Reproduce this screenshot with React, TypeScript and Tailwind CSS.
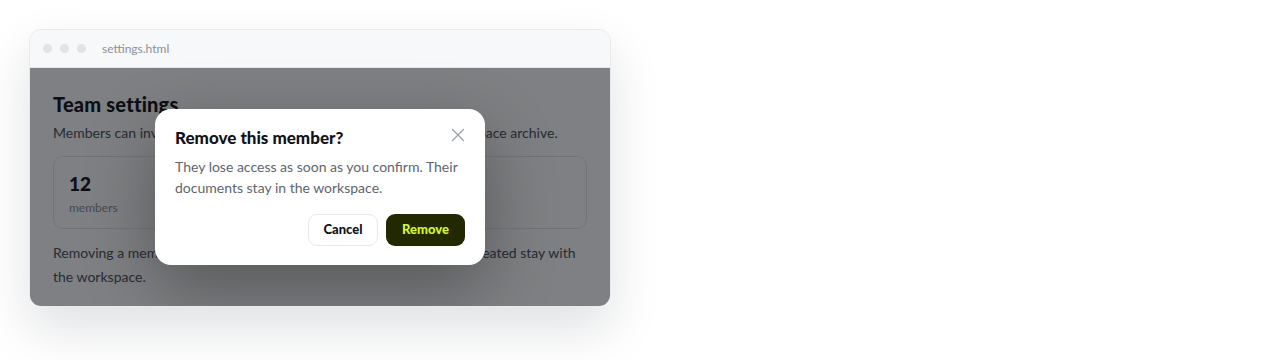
import React from "react";

export default function App() {
  return (
    <div className="w-[1280px] h-[360px] bg-white" style={{ fontFamily: 'Lato, "Noto Sans", sans-serif' }}>
      <div className="pt-[29px] pl-[29px]">
        <div className="w-[582px] h-[278px] rounded-[12px] overflow-hidden border border-[#e8eaee] shadow-[0_22px_50px_rgba(15,23,42,0.13)] flex flex-col relative">
          <div className="h-[38px] bg-[#f7f8fa] border-b border-[#e4e6ea] flex items-center pl-[13px] shrink-0">
            <div className="flex gap-[8px]">
              <span className="w-[9px] h-[9px] rounded-full bg-[#e1e3e6]" />
              <span className="w-[9px] h-[9px] rounded-full bg-[#e1e3e6]" />
              <span className="w-[9px] h-[9px] rounded-full bg-[#e1e3e6]" />
            </div>
            <span className="ml-[16px] text-[12px] text-[#8c9098]">settings.html</span>
          </div>
          <div className="relative flex-1 bg-white">
            <div className="px-[23px] pt-[22px]">
              <h1 className="text-[20px] leading-[28px] font-black tracking-[0.2px] text-[#111318]">Team settings</h1>
              <p className="mt-[4px] text-[14px] leading-[21px] text-[#4b5058]">
                Members can invite others, edit shared documents and use the workspace archive.
              </p>
              <div className="mt-[13px] h-[73px] rounded-[10px] border border-[#e5e7eb] px-[15px] pt-[14px]">
                <div className="text-[19px] leading-[26px] font-black text-[#111318]">12</div>
                <div className="text-[12px] leading-[16px] mt-[3px] text-[#8a8f97]">members</div>
              </div>
              <p className="mt-[12px] text-[14px] leading-[24px] text-[#4b5058]">
                Removing a member keeps their history, and all the documents they created stay with the workspace.
              </p>
            </div>
            <div className="absolute inset-0 bg-[rgba(8,11,18,0.52)] flex items-center justify-center">
              <div className="w-[330px] bg-white rounded-[16px] px-[20px] pt-[17px] pb-[19px] shadow-[0_24px_70px_rgba(0,0,0,0.32)]">
                <div className="flex items-start justify-between">
                  <h2 className="text-[17px] leading-[24px] font-black text-[#111318]">Remove this member?</h2>
                  <svg className="mt-[1px] mr-[-1px]" width="16" height="16" viewBox="0 0 16 16" fill="none" stroke="#9ca0a8" strokeWidth="1.3" strokeLinecap="round">
                    <path d="M2.5 2.5 L13.5 13.5 M13.5 2.5 L2.5 13.5" />
                  </svg>
                </div>
                <p className="mt-[6px] text-[14px] leading-[21px] text-[#60656e]">
                  They lose access as soon as you confirm. Their documents stay in the workspace.
                </p>
                <div className="mt-[16px] flex justify-end gap-[8px]">
                  <button className="h-[32px] w-[70px] rounded-[9px] border border-[#e6e8eb] bg-white text-[13px] font-black text-[#111318]">
                    Cancel
                  </button>
                  <button className="h-[32px] w-[79px] rounded-[9px] bg-[#222800] text-[13px] font-black text-[#d6f53a]">
                    Remove
                  </button>
                </div>
              </div>
            </div>
          </div>
        </div>
      </div>
    </div>
  );
}
